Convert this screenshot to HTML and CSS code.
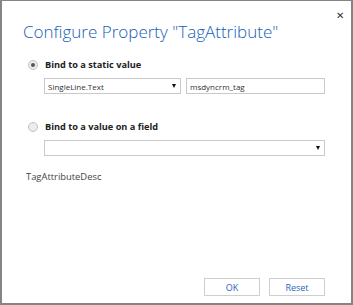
FILE: index.html
```html
<!DOCTYPE html>
<html lang="en">
<head>
  <meta charset="UTF-8">
  <title>Configure Property</title>
  <link rel="stylesheet" href="styles.css">
</head>
<body>
  <div class="dialog">
    <button class="close" type="button">&#x2715;</button>
    <h1 class="title">Configure Property "TagAttribute"</h1>

    <div class="option">
      <label class="radio-row">
        <span class="radio checked"></span>
        <span class="radio-label">Bind to a static value</span>
      </label>
      <div class="fields">
        <div class="select short">
          <span>SingleLine.Text</span>
          <span class="arrow"></span>
        </div>
        <div class="input">msdyncrm_tag</div>
      </div>
    </div>

    <div class="option">
      <label class="radio-row">
        <span class="radio"></span>
        <span class="radio-label">Bind to a value on a field</span>
      </label>
      <div class="fields">
        <div class="select wide">
          <span></span>
          <span class="arrow"></span>
        </div>
      </div>
    </div>

    <p class="desc">TagAttributeDesc</p>

    <div class="buttons">
      <button type="button">OK</button>
      <button type="button">Reset</button>
    </div>
  </div>
</body>
</html>
```

FILE: styles.css
```css
html, body {
  margin: 0;
  padding: 0;
}

body {
  font-family: "Open Sans", "Noto Sans", sans-serif;
  background-color: white;
}

.dialog {
  position: relative;
  box-sizing: border-box;
  width: 353px;
  height: 305px;
  border: 2px solid #858585;
  border-top-width: 1px;
  display: flex;
  flex-direction: column;
  padding: 0 26px 0 21px;
}

.close {
  position: absolute;
  top: 9px;
  right: 7px;
  border: none;
  background: none;
  font-size: 10px;
  color: #333;
  padding: 0;
  cursor: pointer;
}

.title {
  margin: 20px 0 0 0;
  font-size: 17px;
  font-weight: 300;
  color: #1560b8;
  line-height: 22px;
}

.option {
  margin-top: 15px;
}

.option + .option {
  margin-top: 26px;
}

.radio-row {
  display: flex;
  align-items: center;
  gap: 7px;
  padding-left: 5px;
}

.radio {
  width: 8px;
  height: 8px;
  border-radius: 50%;
  border: 1px solid #c2c2c2;
  background: #ececec;
  display: flex;
  align-items: center;
  justify-content: center;
}

.radio.checked::after {
  content: "";
  width: 4px;
  height: 4px;
  border-radius: 50%;
  background: #555;
}

.radio-label {
  font-size: 9.2px;
  font-weight: bold;
  color: #222;
}

.fields {
  display: flex;
  gap: 5px;
  margin: 7px 0 0 21px;
}

.select, .input {
  box-sizing: border-box;
  height: 16px;
  border: 1px solid #c9c9c9;
  font-size: 8px;
  color: #333;
  display: flex;
  align-items: center;
  padding: 0 3px;
}

.select {
  justify-content: space-between;
  padding-right: 4px;
}

.select.short {
  width: 137px;
}

.select.wide {
  flex: 1;
}

.input {
  flex: 1;
}

.arrow {
  width: 0;
  height: 0;
  border-left: 2.5px solid transparent;
  border-right: 2.5px solid transparent;
  border-top: 4px solid #111;
}

.desc {
  margin: 14px 0 0 3px;
  font-size: 9.4px;
  color: #444;
}

.buttons {
  margin-top: auto;
  margin-bottom: 7px;
  display: flex;
  justify-content: flex-end;
  gap: 9px;
}

.buttons button {
  width: 56px;
  height: 18px;
  background: white;
  border: 1px solid #cfcfcf;
  color: #2a66c0;
  font-family: inherit;
  font-size: 9px;
  padding: 0;
  cursor: pointer;
}
```
